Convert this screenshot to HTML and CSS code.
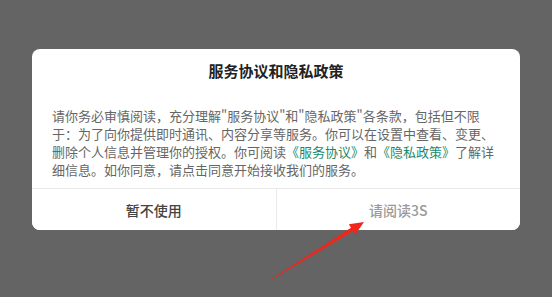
FILE: index.html
```html
<!DOCTYPE html>
<html lang="zh-CN">
<head>
<meta charset="utf-8">
<title>服务协议和隐私政策</title>
<link rel="stylesheet" href="styles.css">
</head>
<body>
<div class="screen">
  <div class="dialog">
    <h1 class="dialog-title">服务协议和隐私政策</h1>
    <p class="dialog-text">请你务必审慎阅读，充分理解"服务协议"和"隐私政策"各条款，包括但不限于：为了向你提供即时通讯、内容分享等服务。你可以在设置中查看、变更、删除个人信息并管理你的授权。你可阅读<a class="link">《服务协议》</a>和<a class="link">《隐私政策》</a>了解详细信息。如你同意，请点击同意开始接收我们的服务。</p>
    <div class="dialog-actions">
      <button class="btn btn-cancel">暂不使用</button>
      <button class="btn btn-wait">请阅读3S</button>
    </div>
  </div>
  <svg class="arrow" width="552" height="297" viewBox="0 0 552 297" aria-hidden="true">
    <polygon fill="#f0261c" points="272.2,279.3 353.2,231.1 355.3,234.5 364,222 348.9,224.3 351,227.7 271.8,278.7"/>
  </svg>
</div>
</body>
</html>
```

FILE: styles.css
```css
html, body {
  margin: 0;
  padding: 0;
}
body {
  background: #646464;
  font-family: "Noto Sans CJK SC", "Noto Sans", sans-serif;
}
.screen {
  position: relative;
  width: 552px;
  height: 297px;
  padding-top: 49px;
  box-sizing: border-box;
  display: flex;
  flex-direction: column;
  align-items: center;
}
.dialog {
  width: 488px;
  background: #ffffff;
  border-radius: 8px;
  overflow: hidden;
  display: flex;
  flex-direction: column;
}
.dialog-title {
  margin: 0;
  padding-top: 10px;
  font-size: 15px;
  line-height: 23px;
  font-weight: 700;
  color: #222222;
  text-align: center;
}
.dialog-text {
  margin: 25px 0 0;
  padding: 0 22px 9px 20px;
  font-size: 13px;
  line-height: 18px;
  color: #666666;
}
.link {
  color: #1b8a6b;
}
.dialog-actions {
  display: flex;
  border-top: 1px solid #e9e9e9;
  height: 41px;
}
.btn {
  flex: 1;
  border: 0;
  background: #ffffff;
  font-family: inherit;
  font-size: 14px;
  font-weight: 500;
  padding: 0;
  margin: 0;
}
.btn-cancel {
  color: #444444;
  border-right: 1px solid #e9e9e9;
}
.btn-wait {
  color: #9a9a9a;
}
.arrow {
  position: absolute;
  left: 0;
  top: 0;
  pointer-events: none;
}
```
